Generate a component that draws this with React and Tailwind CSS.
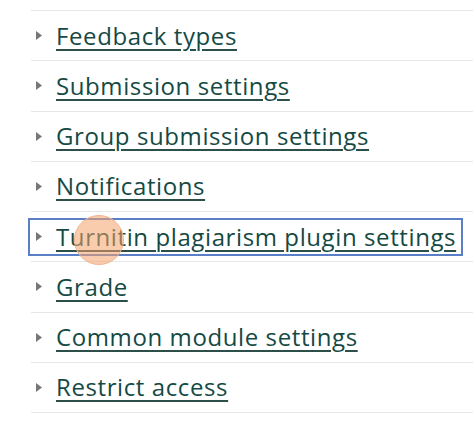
import React from "react";

const sections = [
  "Feedback types",
  "Submission settings",
  "Group submission settings",
  "Notifications",
  "Turnitin plagiarism plugin settings",
  "Grade",
  "Common module settings",
  "Restrict access",
];

function Caret() {
  return (
    <svg width="8" height="11" viewBox="0 0 8 11" className="shrink-0">
      <path d="M1 1 L7 5.5 L1 10 Z" fill="#777777" />
    </svg>
  );
}

export default function App() {
  return (
    <div
      className="w-[473px] h-[429px] bg-white overflow-hidden pt-[10px] pl-[31px]"
      style={{ fontFamily: "'Open Sans', Lato, sans-serif" }}
    >
      <div className="border-t border-[#e6e6e6]">
        {sections.map((name, i) => (
          <div
            key={name}
            className="relative h-[50.25px] border-b border-[#e6e6e6] flex items-center"
          >
            {i === 4 && (
              <div className="absolute left-[-3px] w-[435px] top-[6px] bottom-[5px] border-2 border-[#5b7fc7]" />
            )}
            <div className="flex items-center pl-[4px] gap-[13px]">
              <Caret />
              <span className="relative text-[24px] leading-none tracking-[0.6px] text-[#154a44] underline decoration-[2px] underline-offset-[4px] decoration-[#2d4f4a]">
                {name}
              </span>
            </div>
            {i === 4 && (
              <div className="absolute left-[43px] top-[3px] w-[50px] h-[50px] rounded-full bg-[#f4a36b]/55 border border-[#f2b48c]" />
            )}
          </div>
        ))}
      </div>
    </div>
  );
}
